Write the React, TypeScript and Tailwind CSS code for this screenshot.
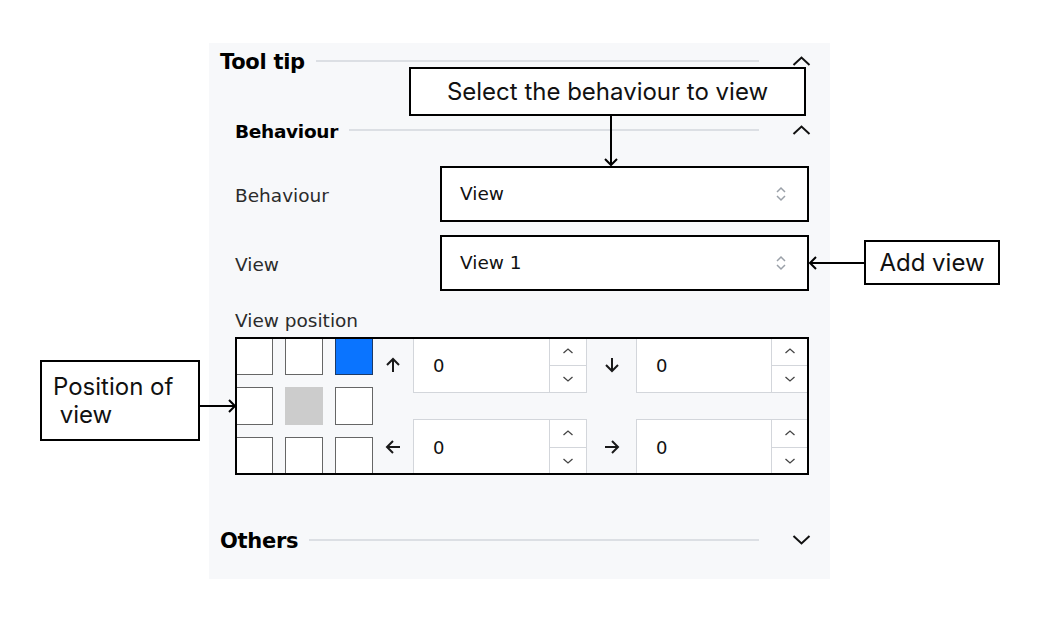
import React from "react";

const heading = "font-['DejaVu_Sans',sans-serif] font-bold text-black tracking-[-0.3px] pt-[3px]";
const body = "font-['DejaVu_Sans',sans-serif]";

function Chevron({ up }: { up?: boolean }) {
  return (
    <svg width="19" height="10" viewBox="0 0 19 10" className="shrink-0">
      <path
        d={up ? "M1.5 9 L9.5 1.5 L17.5 9" : "M1.5 1 L9.5 8.5 L17.5 1"}
        fill="none"
        stroke="#111"
        strokeWidth="2"
      />
    </svg>
  );
}

function SectionHead({ title, size, up }: { title: string; size: string; up?: boolean }) {
  return (
    <div className="flex items-center h-[36px]">
      <span className={`${heading} ${size}`}>{title}</span>
      <div className="flex-1 h-[2px] bg-[#dcdfe4] ml-[11px] mr-[33px]" />
      <Chevron up={up} />
    </div>
  );
}

function UpDown() {
  return (
    <svg width="12" height="18" viewBox="0 0 12 18">
      <path d="M2 7 L6 3 L10 7" fill="none" stroke="#9aa0a8" strokeWidth="1.5" />
      <path d="M2 11 L6 15 L10 11" fill="none" stroke="#9aa0a8" strokeWidth="1.5" />
    </svg>
  );
}

function SelectField({ label, value }: { label: string; value: string }) {
  return (
    <div className="flex items-center">
      <div className={`w-[205px] pt-[4px] text-[18.5px] text-[#2b2b2b] ${body}`}>{label}</div>
      <div className="w-[369px] h-[56px] bg-white border-2 border-black flex items-center justify-between pl-[18px] pr-[20px]">
        <span className={`text-[18.5px] text-[#111] ${body}`}>{value}</span>
        <UpDown />
      </div>
    </div>
  );
}

function Arrow({ dir }: { dir: "up" | "down" | "left" | "right" }) {
  const paths: Record<string, string[]> = {
    up: ["M10 17 V4", "M4 10 L10 4 L16 10"],
    down: ["M10 3 V16", "M4 10 L10 16 L16 10"],
    left: ["M17 10 H4", "M10 4 L4 10 L10 16"],
    right: ["M3 10 H16", "M10 4 L16 10 L10 16"],
  };
  return (
    <svg width="20" height="20" viewBox="0 0 20 20">
      {paths[dir].map((d, i) => (
        <path key={i} d={d} fill="none" stroke="#1a1a1a" strokeWidth="2" />
      ))}
    </svg>
  );
}

function NumberInput({ w }: { w: string }) {
  return (
    <div className={`${w} h-[56px] bg-white border border-[#d3d6db] flex`}>
      <div className={`flex-1 flex items-center pl-[19px] text-[18px] text-[#111] ${body}`}>0</div>
      <div className="w-[37px] border-l border-[#d3d6db] flex flex-col">
        <div className="flex-1 flex items-center justify-center border-b border-[#d3d6db]">
          <svg width="12" height="8" viewBox="0 0 12 8">
            <path d="M1.5 6 L6 2 L10.5 6" fill="none" stroke="#444" strokeWidth="1.3" />
          </svg>
        </div>
        <div className="flex-1 flex items-center justify-center">
          <svg width="12" height="8" viewBox="0 0 12 8">
            <path d="M1.5 2 L6 6 L10.5 2" fill="none" stroke="#444" strokeWidth="1.3" />
          </svg>
        </div>
      </div>
    </div>
  );
}

function PositionGrid() {
  const cells = [0, 1, 2, 3, 4, 5, 6, 7, 8];
  return (
    <div className="relative w-[574px] h-[138px] flex">
      <div className="grid grid-cols-[38px_38px_38px] grid-rows-[38px_38px_38px] gap-[12px]">
        {cells.map((c) =>
          c === 2 ? (
            <div key={c} className="bg-[#0a74ff] border border-[#1d3a66]" />
          ) : c === 4 ? (
            <div key={c} className="bg-[#cccccc]" />
          ) : (
            <div key={c} className="bg-white border border-[#666]" />
          )
        )}
      </div>
      <div className="flex flex-col justify-between">
        <div className="flex items-center">
          <div className="w-[40px] flex justify-center"><Arrow dir="up" /></div>
          <NumberInput w="w-[174px]" />
          <div className="w-[49px] flex justify-center"><Arrow dir="down" /></div>
          <NumberInput w="w-[173px]" />
        </div>
        <div className="flex items-center">
          <div className="w-[40px] flex justify-center"><Arrow dir="left" /></div>
          <NumberInput w="w-[174px]" />
          <div className="w-[49px] flex justify-center"><Arrow dir="right" /></div>
          <NumberInput w="w-[173px]" />
        </div>
      </div>
      <div className="absolute inset-0 border-2 border-black pointer-events-none" />
    </div>
  );
}

const callout = "absolute bg-white border-2 border-black text-[24px] text-[#111] font-['Inter',sans-serif] flex items-center";

export default function App() {
  return (
    <div className="relative w-[1040px] h-[620px] bg-white overflow-hidden pl-[209px] pt-[43px]">
      <div className="w-[621px] h-[536px] bg-[#f7f8fa] flex flex-col pl-[11px] pr-[19px]">
        <SectionHead title="Tool tip" size="text-[21px]" up />

        <div className="pl-[15px] flex flex-col">
          <div className="mt-[33px]">
            <SectionHead title="Behaviour" size="text-[18.5px]" up />
          </div>
          <div className="pr-[2px] mt-[18px] flex flex-col gap-[13px]">
            <SelectField label="Behaviour" value="View" />
            <SelectField label="View" value="View 1" />
          </div>
          <div className={`mt-[20px] h-[20px] leading-[20px] text-[18.5px] text-[#2b2b2b] ${body}`}>
            View position
          </div>
          <div className="mt-[6px]">
            <PositionGrid />
          </div>
        </div>

        <div className="mt-[47px]">
          <SectionHead title="Others" size="text-[21px]" />
        </div>
      </div>

      {/* annotations */}
      <div className={`${callout} left-[409px] top-[67px] w-[397px] h-[49px] justify-center`}>
        Select the behaviour to view
      </div>
      <div className={`${callout} left-[864px] top-[240px] w-[136px] h-[45px] justify-center`}>
        Add view
      </div>
      <div className={`${callout} left-[40px] top-[360px] w-[160px] h-[81px] pl-[11px] leading-[28px] whitespace-pre`}>
        {"Position of\n view"}
      </div>
      <svg className="absolute inset-0 pointer-events-none" width="1040" height="620">
        <g fill="none" stroke="#000" strokeWidth="2">
          <path d="M611 116 V165" />
          <path d="M605 159 L611 165 L617 159" />
          <path d="M864 263 H810" />
          <path d="M816 257 L810 263 L816 269" />
          <path d="M199 406 H235" />
          <path d="M229 400 L235 406 L229 412" />
        </g>
      </svg>
    </div>
  );
}
